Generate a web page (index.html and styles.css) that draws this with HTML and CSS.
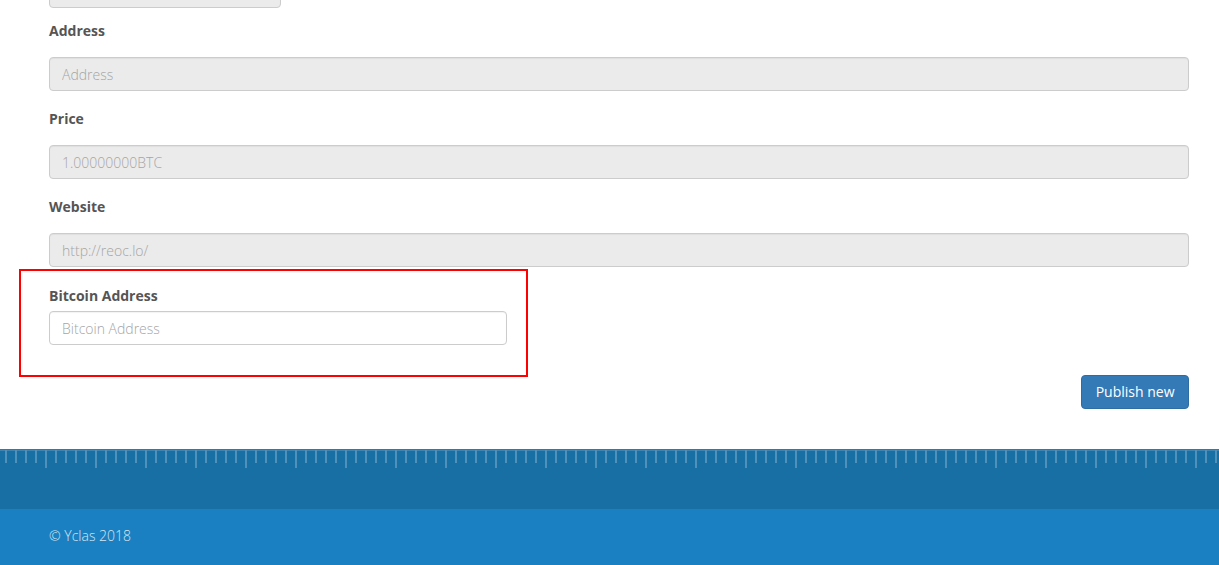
FILE: index.html
```html
<!DOCTYPE html>
<html lang="en">
<head>
<meta charset="utf-8">
<title>Publish new</title>
<link rel="stylesheet" href="styles.css">
</head>
<body>
<main class="page">
  <form class="form">
    <div class="form-control disabled prev-field"></div>

    <div class="form-group">
      <label class="label">Address</label>
      <input class="form-control disabled" type="text" placeholder="Address" disabled>
    </div>

    <div class="form-group">
      <label class="label">Price</label>
      <input class="form-control disabled" type="text" placeholder="1.00000000BTC" disabled>
    </div>

    <div class="form-group">
      <label class="label">Website</label>
      <input class="form-control disabled" type="text" placeholder="http://reoc.lo/" disabled>
    </div>

    <div class="highlight">
      <label class="label label-tight">Bitcoin Address</label>
      <input class="form-control" type="text" placeholder="Bitcoin Address">
    </div>

    <div class="actions">
      <button type="button" class="btn">Publish new</button>
    </div>
  </form>
</main>
<footer class="footer">
  <div class="ruler"></div>
  <div class="footer-bottom">
    <p class="copy">© Yclas 2018</p>
  </div>
</footer>
</body>
</html>
```
FILE: styles.css
```css
* { box-sizing: border-box; }

html, body {
  margin: 0;
  padding: 0;
  background: #fff;
}

body {
  font-family: "Open Sans", "Liberation Sans", sans-serif;
  font-size: 14px;
  line-height: 20px;
  color: #555;
  overflow: hidden;
}

.page {
  padding: 0 30px 0 49px;
}

.form {
  display: flex;
  flex-direction: column;
}

.form-control {
  display: block;
  width: 100%;
  height: 34px;
  padding: 6px 12px;
  font-family: inherit;
  font-size: 14px;
  font-weight: 300;
  line-height: 20px;
  color: #555;
  background: #fff;
  border: 1px solid #ccc;
  border-radius: 4px;
  box-shadow: inset 0 1px 1px rgba(0,0,0,0.05);
  outline: none;
}

.form-control::placeholder {
  color: #a5a5a5;
  opacity: 1;
}

.form-control.disabled {
  background: #ebebeb;
  cursor: not-allowed;
}

.prev-field {
  width: 232px;
  margin-top: -26px;
  margin-bottom: 11px;
}

.form-group {
  margin-bottom: 16px;
}

.label {
  display: block;
  font-weight: 700;
  color: #555;
  padding-top: 2px;
  margin-bottom: 16px;
}

.label-tight {
  padding-top: 1px;
  margin-bottom: 5px;
}

.highlight {
  width: 509px;
  margin: -14px 0 0 -30px;
  padding: 14px 19px 30px 28px;
  border: 2px solid #f00;
}

.actions {
  display: flex;
  justify-content: flex-end;
  margin-top: -2px;
}

.btn {
  height: 34px;
  padding: 6px 13.5px;
  font-family: inherit;
  font-size: 14px;
  line-height: 20px;
  color: #fff;
  background: #337ab7;
  border: 1px solid #2e6da4;
  border-radius: 4px;
  cursor: pointer;
}

.footer {
  margin-top: 40px;
}

.ruler {
  height: 60px;
  background-color: #176fa3;
  border-top: 1px solid #2a7cad;
  background-image:
    linear-gradient(to right, transparent 45px, #4f91bb 45px, #4f91bb 47px, transparent 47px),
    linear-gradient(to right, transparent 5px, #4f91bb 5px, #4f91bb 7px, transparent 7px),
    linear-gradient(#3a85b5, #3a85b5);
  background-size: 50px 18px, 10px 13px, 100% 1px;
  background-repeat: repeat-x, repeat-x, no-repeat;
  background-position: 0 0, 0 0, 0 0;
}

.footer-bottom {
  background: #1b80c1;
  height: 60px;
  padding: 17px 30px 0 49px;
}

.copy {
  margin: 0;
  font-size: 14px;
  font-weight: 300;
  color: #d3e6f3;
}
```
